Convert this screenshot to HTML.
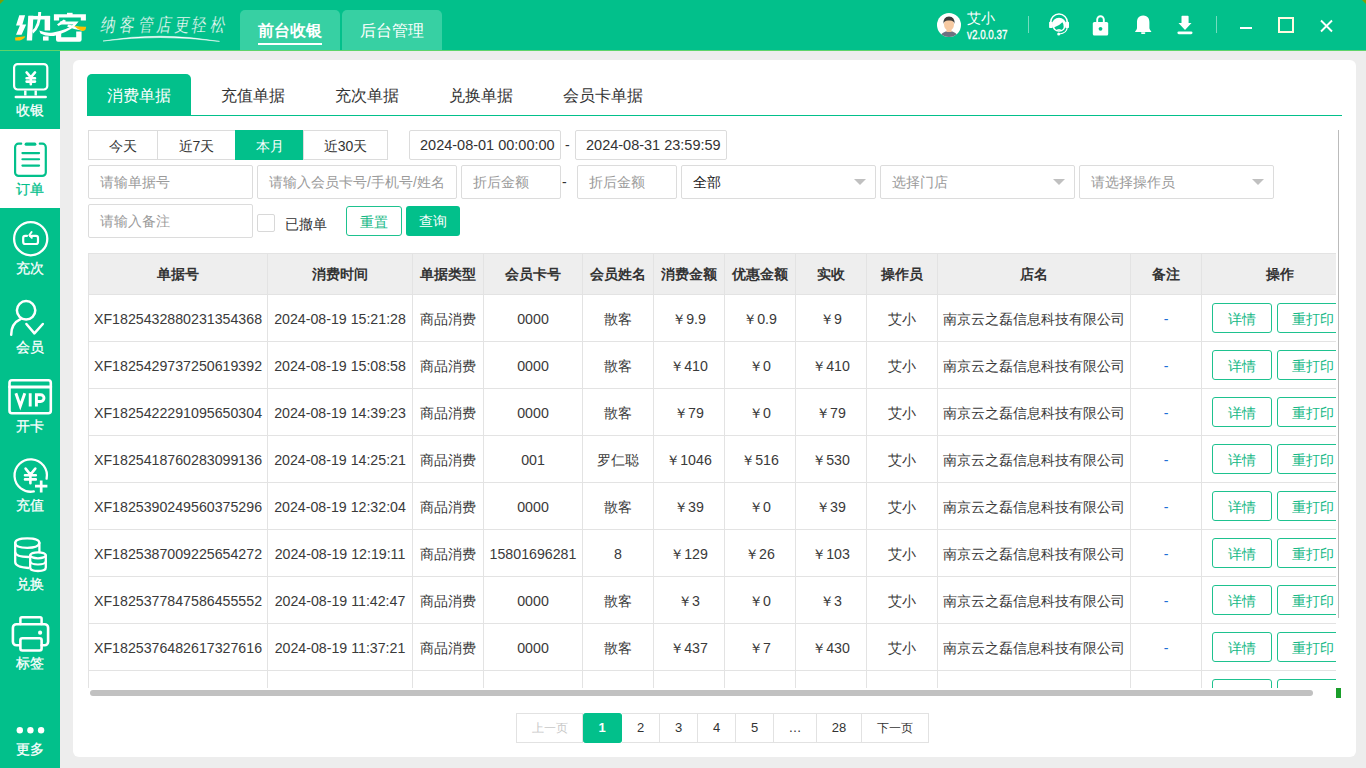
<!DOCTYPE html>
<html><head><meta charset="utf-8">
<style>
*{box-sizing:border-box;margin:0;padding:0}
html,body{width:1366px;height:768px;overflow:hidden;background:#ededed;font-family:"Liberation Sans",sans-serif;color:#333;font-size:14px}
.abs{position:absolute}
#hdr{left:0;top:0;width:1366px;height:51px;background:#02c08b;border-bottom:1px solid #5fd46a}
#side{left:0;top:51px;width:60px;height:717px;background:#02c08b}
.lbl{left:0;width:60px;text-align:center;font-size:14px;line-height:16px;color:#fff;-webkit-text-stroke:0.25px currentColor}
.si{position:absolute;left:0;width:60px;height:79px;color:#fff;text-align:center}
.si .lb{position:absolute;left:0;width:60px;top:50px;font-size:13px;line-height:16px}
.si svg{position:absolute;left:0;top:0}
.si.act{background:#fff;color:#02c08b}
#panel{left:73px;top:60px;width:1283px;height:697px;background:#fff;border-radius:6px}
.tab{position:absolute;top:74px;height:41px;font-size:16px;line-height:43px;text-align:center;color:#333}
.tab.on{background:#02c08b;color:#fff;border-radius:5px 5px 0 0}
.box{position:absolute;border:1px solid #dcdcdc;background:#fff;font-size:14px;line-height:32px;padding-left:11px;color:#9a9a9a;border-radius:2px}
.seg{position:absolute;top:130px;height:30px;border:1px solid #dcdcdc;text-align:center;line-height:30px;font-size:14px;color:#333}
table{border-collapse:collapse;table-layout:fixed}
td,th{border:1px solid #e3e3e3;text-align:center;font-size:14px;color:#333;white-space:nowrap;overflow:hidden}
th{background:#eeeeee;height:41px;font-weight:bold;padding-top:1px}
td{height:47px;padding-top:2px;font-size:14.2px;color:#3a3a3a}
.bt{display:inline-block;height:30px;border:1px solid #1ec28f;border-radius:3px;color:#14b886;line-height:30px;font-size:14px;vertical-align:middle}
td.ops{text-align:left;padding-left:10px;padding-top:0}
.b1{width:60px;text-align:center}
.b2{width:72px;text-align:center;margin-left:5px}
td.dash{color:#1f6fd6}
.arr{position:absolute;top:179px;width:0;height:0;border-left:6px solid transparent;border-right:6px solid transparent;border-top:6px solid #c0c0c0}
.pg{position:absolute;top:713px;height:30px;border:1px solid #e2e2e2;border-left:none;text-align:center;line-height:28px;font-size:13px;color:#333}
</style></head><body>
<div id="hdr" class="abs"></div>
<div id="side" class="abs"></div>
<div id="panel" class="abs"></div>
<svg class="abs" style="left:0;top:0" width="60" height="768" viewBox="0 0 60 768">
<rect x="0" y="129" width="60" height="79" fill="#fff"/>
<g fill="none" stroke="#fff" stroke-width="2.2" stroke-linecap="round" stroke-linejoin="round">
<!-- 收银 monitor -->
<rect x="14.1" y="64.1" width="33.2" height="25.4" rx="3.5"/>
<path d="M25.3 90.5 V95.5 M35.7 90.5 V95.5" stroke-linecap="butt" stroke-width="2.4"/>
<path d="M15.8 97.1 H45.7" stroke-width="2.5"/>
<path d="M26.6 72.4 L30.8 77.4 L35 72.4 M30.8 77.4 V84.2 M26.6 78.3 H35 M26.6 81.6 H35" stroke-width="2.6"/>
<!-- 充次 -->
<circle cx="30.7" cy="238.7" r="16.6" stroke-width="2.3"/>
<path d="M27 235.8 H25.2 A2 2 0 0 0 23.2 237.8 V242 A2 2 0 0 0 25.2 244 H36 A2 2 0 0 0 38 242 V237.8 A2 2 0 0 0 36 235.8 H30" stroke-width="2.2"/>
<path d="M31.6 232 L29.4 235 L31.8 237.8" stroke-width="2"/>
<!-- 会员 -->
<circle cx="26.1" cy="310.3" r="9.2" stroke-width="2.5"/>
<path d="M20.5 319.2 Q11.2 323.5 11.2 334.8" stroke-width="2.5"/>
<path d="M26.4 324 L34.4 333.4 L42.8 324" stroke-width="2.5"/>
<!-- 开卡 -->
<rect x="9.5" y="380.2" width="41.3" height="33" rx="2.5" stroke-width="2.6"/>
<path d="M9.5 387 H50.8" stroke-width="2.8"/>
<!-- 充值 -->
<path d="M46.6 478.7 A16.2 16.2 0 1 0 33.8 491.4" stroke-width="2.3"/>
<path d="M25.6 468.6 L30.4 474.6 L35.3 468.6 M30.4 474.6 V483.3 M25 475.3 H35.8 M25 479.4 H35.8" stroke-width="2.6"/>
<path d="M35 486.2 H47.4 M41.2 480.4 V492.4" stroke-width="2.7" stroke-linecap="butt"/>
<!-- 兑换 -->
<path d="M28.5 568 Q15.2 567 15.2 562 V543 Q15.2 538.3 27.3 538.3 Q39.4 538.3 39.4 543 V552" stroke-width="2.3"/>
<path d="M15.2 543 Q15.5 547.8 27.3 547.8 Q38.5 547.8 39.4 543" stroke-width="2.3"/>
<path d="M15.2 552.5 Q16 557 28.5 557" stroke-width="2.3"/>
<ellipse cx="38" cy="555.3" rx="7.8" ry="3" stroke-width="2.3"/>
<path d="M30.2 555.3 V567.5 Q30.2 571 38 571 Q45.8 571 45.8 567.5 V555.3" stroke-width="2.3"/>
<path d="M30.2 561.5 Q31 564.5 38 564.5 Q45 564.5 45.8 561.5" stroke-width="2.2"/>
<!-- 标签 printer -->
<path d="M20.4 624 V618.8 A1.5 1.5 0 0 1 21.9 617.3 H40.1 A1.5 1.5 0 0 1 41.6 618.8 V624" stroke-width="2.5"/>
<path d="M19.8 645.3 H16.4 A3.5 3.5 0 0 1 12.9 641.8 V627.7 A3.5 3.5 0 0 1 16.4 624.2 H44.6 A3.5 3.5 0 0 1 48.1 627.7 V641.8 A3.5 3.5 0 0 1 44.6 645.3 H41.6" stroke-width="2.6"/>
<rect x="20.4" y="638.3" width="21.2" height="12.2" rx="2" stroke-width="2.6"/>
</g>
<g fill="none" stroke="#02c08b" stroke-width="2.2" stroke-linecap="round">
<path d="M21.2 143.7 H18.6 A3.5 3.5 0 0 0 15.1 147.2 V172.4 A3.5 3.5 0 0 0 18.6 175.9 H42.3 A3.5 3.5 0 0 0 45.8 172.4 V147.2 A3.5 3.5 0 0 0 42.3 143.7 H39.8"/>
<path d="M26.2 144.2 H34.8" stroke-width="3.2"/>
<path d="M22.4 153.1 H39.1 M22.4 159.2 H39.1 M22.4 165.6 H39.1" stroke-width="2.1"/>
</g>
<circle cx="40.1" cy="632.7" r="2.1" fill="#fff"/>
<circle cx="19.8" cy="730.2" r="3.2" fill="#fff"/>
<circle cx="30.4" cy="730.2" r="3.2" fill="#fff"/>
<circle cx="41.1" cy="730.2" r="3.2" fill="#fff"/>
<path d="M15.9 393.3 L20.3 406 L24.8 393.3 M30.2 393.3 V406.6 M36.4 406.6 V394.7 H40.6 A3.4 3.4 0 0 1 40.6 401.5 H36.4" fill="none" stroke="#fff" stroke-width="2.9"/>
</svg>
<div class="abs lbl" style="top:102px">收银</div>
<div class="abs lbl" style="top:181px;color:#02c08b">订单</div>
<div class="abs lbl" style="top:260px">充次</div>
<div class="abs lbl" style="top:339px">会员</div>
<div class="abs lbl" style="top:418px">开卡</div>
<div class="abs lbl" style="top:497px">充值</div>
<div class="abs lbl" style="top:576px">兑换</div>
<div class="abs lbl" style="top:655px">标签</div>
<div class="abs lbl" style="top:741px">更多</div>


<svg class="abs" style="left:0;top:0" width="1366" height="50" viewBox="0 0 1366 50">
<path d="M0 0 H4 L0 4 Z" fill="#7a9f08"/>
<!-- logo -->
<g fill="#fff">
<path d="M19.3 15.3 H25.1 L22.4 24.4 H26.2 L21.6 34.7 H16 L19.9 25.6 H16 Z"/>
<path d="M28.3 15.8 H33.4 L32.1 40.6 H26.7 Z"/>
<path d="M28.8 15.9 H50.1 V19.5 H28.8 Z"/>
<path d="M44.6 15.9 H50.1 V30.5 H44.6 Z"/>
<path d="M38.2 12 H41.2 Q41.2 27 33.2 33.4 L32 30.8 Q38.4 25.5 38.2 12 Z"/>
<rect x="43" y="36.4" width="5.6" height="4.2"/>
<path d="M53.9 14.2 H85.9 V20.4 H80.8 V17.6 H59.1 V20.4 H53.9 Z"/>
<rect x="67" y="12.8" width="5.6" height="2.5"/>
<path d="M63.8 19.6 L66.2 21 Q62 24 58.6 26 L57 24.4 Q60.5 22 63.8 19.6 Z"/>
<path d="M60 21.6 H78.6 Q73 30.5 57 35.2 Q48 37.6 40.5 33.5 L39.3 30.6 Q46 33.6 53 32.4 Q67 30 73.4 24.4 H60 Z"/>
<path d="M67 26.4 Q75 29.8 82.6 30.7 L81.8 27.4 Q74 26.4 68.4 24.6 Z"/>
<path d="M56 33.4 L61.2 32.2 V37.2 H76.2 V31.6 H81.6 V39.8 Q81.6 41.7 79.6 41.7 H58 Q56 41.7 56 39.8 Z"/>
</g>
<path d="M15.1 37.4 L25.3 36.2 L24.4 37.9 Q21.5 40.3 19.7 40.5 H15.3 Z" fill="#fdbf00"/>
<path d="M74 26 Q80 26.8 86.2 26.7 L85.6 29.6 Q83.5 31.5 82.2 31 Q77 29 74 26 Z" fill="#fdbf00"/>
<!-- slogan -->
<g fill="#fff" stroke="#02c08b" stroke-width="0.25" font-size="17" style="font-family:'Liberation Sans',sans-serif">
<text transform="translate(99.6,31) skewX(-10) scale(0.86,1.08)">纳</text>
<text transform="translate(118.6,31) skewX(-10) scale(0.86,1.08)">客</text>
<text transform="translate(138,31) skewX(-10) scale(0.86,1.08)">管</text>
<text transform="translate(156,31) skewX(-10) scale(0.86,1.08)">店</text>
<text transform="translate(174,31) skewX(-10) scale(0.86,1.08)">更</text>
<text transform="translate(191.4,31) skewX(-10) scale(0.86,1.08)">轻</text>
<text transform="translate(209.8,31) skewX(-10) scale(0.86,1.08)">松</text>
</g>
<path d="M103 41 Q160 31.2 219.5 41.4 Q160 33.8 103 41 Z" fill="#fff" stroke="#fff" stroke-width="0.5"/>
<!-- avatar -->
<defs><clipPath id="avc"><circle cx="949" cy="25" r="12"/></clipPath></defs>
<circle cx="949" cy="25" r="12" fill="#fff"/>
<g clip-path="url(#avc)">
<ellipse cx="949" cy="38" rx="9" ry="7" fill="#6d7180"/>
<rect x="946.5" y="27" width="5" height="5" fill="#f3c39c"/>
<ellipse cx="949" cy="24.5" rx="5" ry="6" fill="#f6c9a2"/>
<path d="M943.5 24 Q943 16.5 949 16.5 Q955 16.5 954.5 24 Q954 20 949 20.5 Q944 20 943.5 24 Z" fill="#3b3b3b"/>
</g>
</svg>
<div class="abs" style="left:967px;top:9px;font-size:14px;line-height:18px;color:#fff">艾小</div>
<div class="abs" style="left:967px;top:28px;font-size:12px;line-height:14px;color:#fff;transform:scaleX(0.82);transform-origin:0 0;-webkit-text-stroke:0.35px #fff">v2.0.0.37</div>
<svg class="abs" style="left:1000px;top:0" width="366" height="50" viewBox="1000 0 366 50">
<rect x="1028" y="16" width="1" height="17" fill="#fff" opacity="0.45"/>
<rect x="1216" y="16" width="1" height="17" fill="#fff" opacity="0.45"/>
<!-- headset -->
<g transform="translate(1044,10)">
<path d="M6.6 12.5 A8.4 8.4 0 0 1 23.4 12.5" fill="none" stroke="#fff" stroke-width="1.5"/>
<rect x="5.1" y="11.7" width="3.6" height="6.4" rx="0.8" fill="#fff"/>
<rect x="21.4" y="11.7" width="3.6" height="6.4" rx="0.8" fill="#fff"/>
<ellipse cx="15" cy="14.8" rx="7.1" ry="7" fill="#fff"/>
<path d="M10.4 17.2 Q15.5 15.6 18.4 12.3 Q19.9 14 19.7 17 Q19.2 20.2 15 20.3 Q11.1 20.2 10.4 17.2 Z" fill="#02c08b"/>
<path d="M13.3 19.6 H16.7" stroke="#fff" stroke-width="0.9"/>
<path d="M23.2 17.8 Q22.6 23.4 15.5 24" fill="none" stroke="#fff" stroke-width="1.2"/>
<circle cx="14.7" cy="24" r="1.5" fill="#fff"/>
</g>
<!-- lock -->
<path d="M1097.2 22 V19.5 A3.3 3.3 0 0 1 1103.8 19.5 V22" fill="none" stroke="#fff" stroke-width="1.9"/>
<rect x="1092.8" y="21.9" width="15.4" height="13.6" rx="1.5" fill="#fff"/>
<circle cx="1100.5" cy="28.8" r="1.9" fill="#02c08b"/>
<!-- bell -->
<path d="M1143.2 15.6 C1148.3 15.9 1149.4 19 1149.4 22.5 V28.3 Q1149.8 30.2 1151.2 31.2 V32.1 H1135.2 V31.2 Q1136.6 30.2 1137 28.3 V22.5 C1137 19 1138.1 15.9 1143.2 15.6 Z" fill="#fff"/>
<rect x="1141" y="32.2" width="4.4" height="1.7" rx="0.8" fill="#fff"/>
<!-- download -->
<path d="M1181.5 16.5 Q1181.5 15.8 1182.3 15.8 H1187.8 Q1188.6 15.8 1188.6 16.5 V23 H1191.5 L1185 30 L1178.5 23 H1181.5 Z" fill="#fff"/>
<rect x="1177.4" y="31.4" width="15.1" height="2.8" rx="1.4" fill="#fff"/>
<!-- window ctrls -->
<rect x="1240" y="27" width="12" height="2" fill="#fff"/>
<rect x="1279" y="18" width="14" height="14" fill="none" stroke="#fffbe0" stroke-width="2"/>
<path d="M1321 20.5 L1332 31.5 M1332 20.5 L1321 31.5" stroke="#fff" stroke-width="1.9"/>
<path d="M1362 0 H1366 V4 Z" fill="#7a9f08"/>
</svg>

<!-- header tabs -->
<div class="abs" style="left:240px;top:10px;width:100px;height:40px;background:#37d0a3;border-radius:5px 5px 0 0"></div>
<div class="abs" style="left:342px;top:10px;width:100px;height:40px;background:#37d0a3;border-radius:5px 5px 0 0"></div>
<div class="abs" style="left:240px;top:11px;width:100px;height:40px;line-height:40px;text-align:center;color:#fff;font-size:16px;font-weight:bold">前台收银</div>
<div class="abs" style="left:258px;top:43px;width:64px;height:2px;background:#fff"></div>
<div class="abs" style="left:342px;top:11px;width:100px;height:40px;line-height:40px;text-align:center;color:#fff;font-size:16px">后台管理</div>

<!-- content tabs -->
<div class="tab on" style="left:87px;width:104px">消费单据</div>
<div class="tab" style="left:201px;width:104px">充值单据</div>
<div class="tab" style="left:315px;width:104px">充次单据</div>
<div class="tab" style="left:429px;width:104px">兑换单据</div>
<div class="tab" style="left:543px;width:120px">会员卡单据</div>
<div class="abs" style="left:87px;top:115px;width:1255px;height:1px;background:#02c08b"></div>

<!-- segmented -->
<div class="seg" style="left:88px;width:70px">今天</div>
<div class="seg" style="left:157px;width:79px;border-left:1px solid #dcdcdc">近7天</div>
<div class="seg" style="left:235px;width:69px;background:#02c08b;color:#fff;border-color:#02c08b">本月</div>
<div class="seg" style="left:303px;width:85px">近30天</div>

<div class="box" style="left:409px;top:130px;width:152px;height:30px;line-height:29px;color:#333;padding-left:10px;font-size:14.5px">2024-08-01 00:00:00</div>
<div class="abs" style="left:565px;top:130px;line-height:30px;color:#333">-</div>
<div class="box" style="left:575px;top:130px;width:152px;height:30px;line-height:29px;color:#333;padding-left:10px;font-size:14.5px">2024-08-31 23:59:59</div>

<div class="box" style="left:88px;top:165px;width:165px;height:34px">请输单据号</div>
<div class="box" style="left:257px;top:165px;width:200px;height:34px">请输入会员卡号/手机号/姓名</div>
<div class="box" style="left:461px;top:165px;width:100px;height:34px">折后金额</div>
<div class="abs" style="left:562px;top:165px;line-height:34px;color:#333">-</div>
<div class="box" style="left:577px;top:165px;width:100px;height:34px">折后金额</div>
<div class="box" style="left:681px;top:165px;width:195px;height:34px;color:#1a1a1a">全部</div>
<div class="box" style="left:880px;top:165px;width:195px;height:34px">选择门店</div>
<div class="box" style="left:1079px;top:165px;width:195px;height:34px">请选择操作员</div>

<div class="arr" style="left:854px"></div><div class="arr" style="left:1053px"></div><div class="arr" style="left:1252px"></div>
<div class="box" style="left:88px;top:204px;width:165px;height:34px">请输入备注</div>
<div class="abs" style="left:257px;top:214px;width:18px;height:18px;border:1px solid #d8d8d8;border-radius:2px"></div>
<div class="abs" style="left:285px;top:214px;line-height:20px;font-size:14px;color:#333">已撤单</div>
<div class="abs bt" style="left:346px;top:206px;width:56px;text-align:center">重置</div>
<div class="abs" style="left:406px;top:206px;width:54px;height:30px;background:#02c08b;border-radius:3px;color:#fff;text-align:center;line-height:30px">查询</div>

<div class="abs" style="left:1338px;top:130px;width:1px;height:488px;background:#bbb"></div>

<!-- table -->
<div class="abs" style="left:88px;top:253px;width:1248px;height:435px;overflow:hidden">
<table id="tb" style="width:1269px">
<colgroup><col style="width:179px"><col style="width:145px"><col style="width:71px"><col style="width:99px"><col style="width:71px"><col style="width:71px"><col style="width:71px"><col style="width:71px"><col style="width:71px"><col style="width:193px"><col style="width:71px"><col style="width:156px"></colgroup>
<tr><th>单据号</th><th>消费时间</th><th>单据类型</th><th>会员卡号</th><th>会员姓名</th><th>消费金额</th><th>优惠金额</th><th>实收</th><th>操作员</th><th>店名</th><th>备注</th><th>操作</th></tr>
<tr><td>XF1825432880231354368</td><td>2024-08-19 15:21:28</td><td>商品消费</td><td>0000</td><td>散客</td><td>￥9.9</td><td>￥0.9</td><td>￥9</td><td>艾小</td><td>南京云之磊信息科技有限公司</td><td class="dash">-</td><td class="ops"><span class="bt b1">详情</span><span class="bt b2">重打印</span></td></tr>
<tr><td>XF1825429737250619392</td><td>2024-08-19 15:08:58</td><td>商品消费</td><td>0000</td><td>散客</td><td>￥410</td><td>￥0</td><td>￥410</td><td>艾小</td><td>南京云之磊信息科技有限公司</td><td class="dash">-</td><td class="ops"><span class="bt b1">详情</span><span class="bt b2">重打印</span></td></tr>
<tr><td>XF1825422291095650304</td><td>2024-08-19 14:39:23</td><td>商品消费</td><td>0000</td><td>散客</td><td>￥79</td><td>￥0</td><td>￥79</td><td>艾小</td><td>南京云之磊信息科技有限公司</td><td class="dash">-</td><td class="ops"><span class="bt b1">详情</span><span class="bt b2">重打印</span></td></tr>
<tr><td>XF1825418760283099136</td><td>2024-08-19 14:25:21</td><td>商品消费</td><td>001</td><td>罗仁聪</td><td>￥1046</td><td>￥516</td><td>￥530</td><td>艾小</td><td>南京云之磊信息科技有限公司</td><td class="dash">-</td><td class="ops"><span class="bt b1">详情</span><span class="bt b2">重打印</span></td></tr>
<tr><td>XF1825390249560375296</td><td>2024-08-19 12:32:04</td><td>商品消费</td><td>0000</td><td>散客</td><td>￥39</td><td>￥0</td><td>￥39</td><td>艾小</td><td>南京云之磊信息科技有限公司</td><td class="dash">-</td><td class="ops"><span class="bt b1">详情</span><span class="bt b2">重打印</span></td></tr>
<tr><td>XF1825387009225654272</td><td>2024-08-19 12:19:11</td><td>商品消费</td><td>15801696281</td><td>8</td><td>￥129</td><td>￥26</td><td>￥103</td><td>艾小</td><td>南京云之磊信息科技有限公司</td><td class="dash">-</td><td class="ops"><span class="bt b1">详情</span><span class="bt b2">重打印</span></td></tr>
<tr><td>XF1825377847586455552</td><td>2024-08-19 11:42:47</td><td>商品消费</td><td>0000</td><td>散客</td><td>￥3</td><td>￥0</td><td>￥3</td><td>艾小</td><td>南京云之磊信息科技有限公司</td><td class="dash">-</td><td class="ops"><span class="bt b1">详情</span><span class="bt b2">重打印</span></td></tr>
<tr><td>XF1825376482617327616</td><td>2024-08-19 11:37:21</td><td>商品消费</td><td>0000</td><td>散客</td><td>￥437</td><td>￥7</td><td>￥430</td><td>艾小</td><td>南京云之磊信息科技有限公司</td><td class="dash">-</td><td class="ops"><span class="bt b1">详情</span><span class="bt b2">重打印</span></td></tr>
<tr><td></td><td></td><td></td><td></td><td></td><td></td><td></td><td></td><td></td><td></td><td></td><td class="ops"><span class="bt b1"></span><span class="bt b2"></span></td></tr>
</table>
</div>
<div class="abs" style="left:90px;top:690px;width:1223px;height:6px;background:#c1c1c1;border-radius:3px"></div>
<div class="abs" style="left:1336px;top:688px;width:5px;height:10px;background:#1a9e2a"></div>

<!-- pagination -->
<div class="pg" style="left:516px;width:67px;border-left:1px solid #e2e2e2;color:#c8c8c8;font-size:12px">上一页</div>
<div class="pg" style="left:583px;width:39px;background:#02c08b;border-color:#02c08b;color:#fff;border-radius:3px;font-weight:bold;font-size:13px">1</div>
<div class="pg" style="left:622px;width:38px">2</div>
<div class="pg" style="left:660px;width:38px">3</div>
<div class="pg" style="left:698px;width:38px">4</div>
<div class="pg" style="left:736px;width:38px">5</div>
<div class="pg" style="left:774px;width:43px">…</div>
<div class="pg" style="left:817px;width:45px">28</div>
<div class="pg" style="left:862px;width:67px;font-size:12px">下一页</div>

</body></html>
